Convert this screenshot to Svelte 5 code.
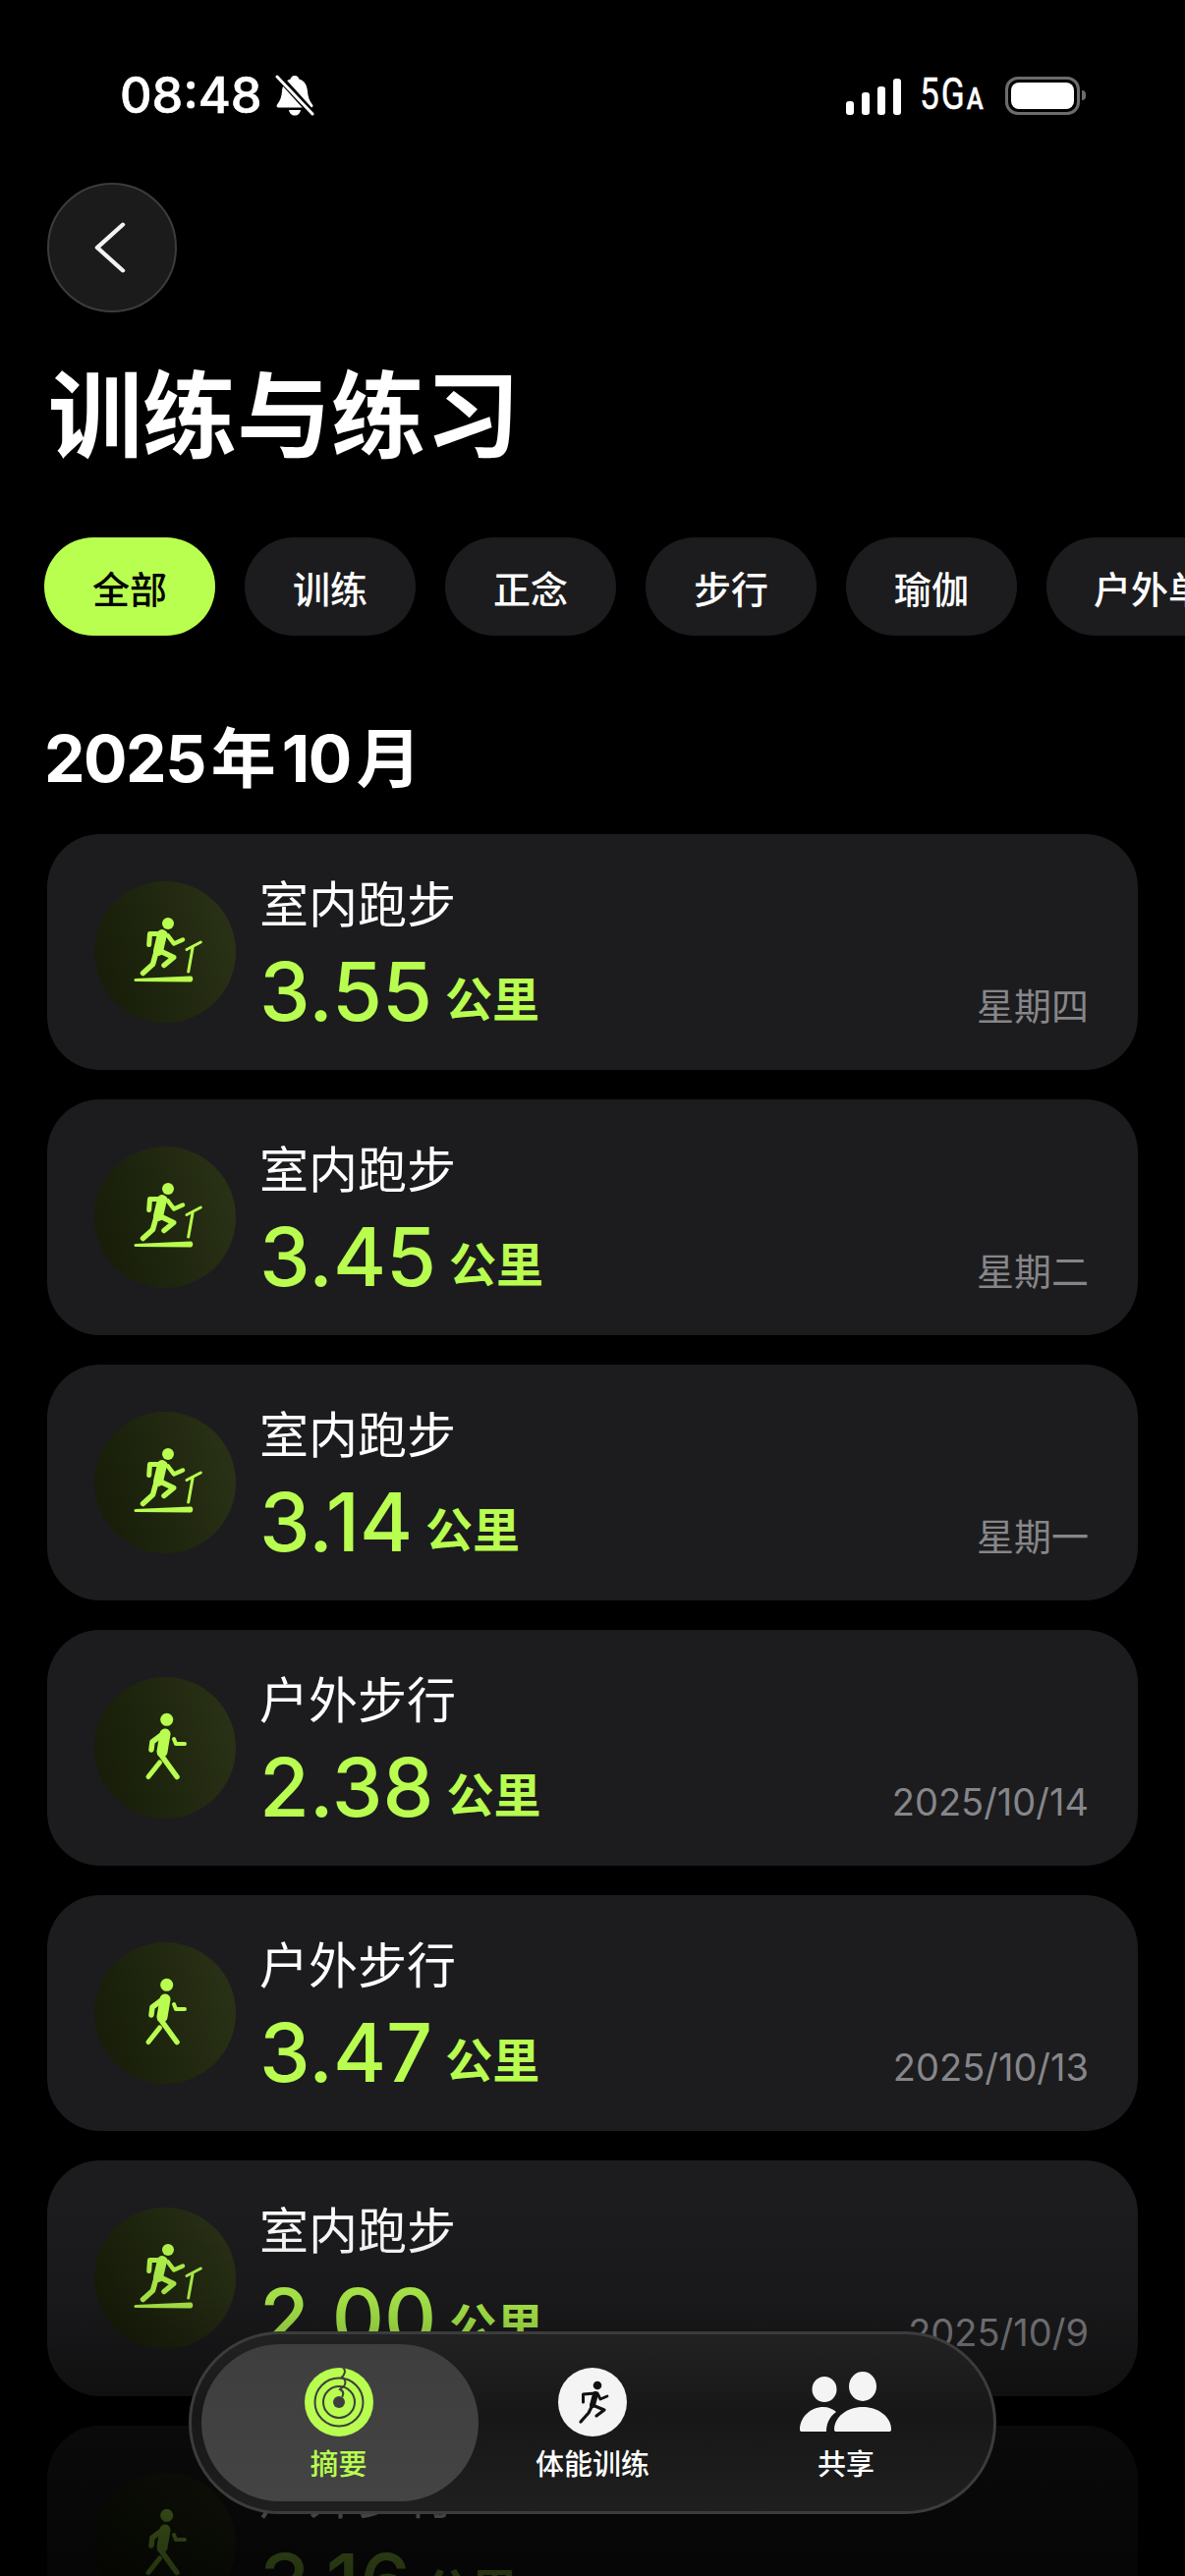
<script>
  const chips = ["全部", "训练", "正念", "步行", "瑜伽", "户外单车"];
  const items = [
    { kind: "run", title: "室内跑步", value: "3.55", date: "星期四" },
    { kind: "run", title: "室内跑步", value: "3.45", date: "星期二" },
    { kind: "run", title: "室内跑步", value: "3.14", date: "星期一" },
    { kind: "walk", title: "户外步行", value: "2.38", date: "2025/10/14" },
    { kind: "walk", title: "户外步行", value: "3.47", date: "2025/10/13" },
    { kind: "run", title: "室内跑步", value: "2.00", date: "2025/10/9" },
    { kind: "walk", title: "户外步行", value: "3.16", date: "2025/10/8" }
  ];
</script>

<div class="page">
  <div class="status">
    <div class="status-left">
      <span class="time">08:48</span>
      <svg class="bell" viewBox="0 0 40 42" width="40" height="42">
        <path d="M20 1c2.500 0 4 1.600 4.400 3.600C30 6.300 32.500 11 33 17c.4 5 1.500 9 5 13.500 1 1.300.3 3-1.500 3H3.500c-1.800 0-2.500-1.700-1.500-3C5.500 26 6.600 22 7 17c.5-6 3-10.700 8.600-12.400C16 2.600 17.500 1 20 1z" fill="#fff"/>
        <path d="M14 36h12c-.5 3.500-3 5.500-6 5.500s-5.500-2-6-5.500z" fill="#fff"/>
        <path d="M2 0 40 42" stroke="#000" stroke-width="7"/>
        <path d="M2 2 38 40" stroke="#fff" stroke-width="3" stroke-linecap="round"/>
      </svg>
    </div>
    <div class="status-right">
      <div class="signal"><i class="b1"></i><i class="b2"></i><i class="b3"></i><i class="b4"></i></div>
      <span class="net">5G<small>A</small></span>
      <div class="battery"><div class="battery-fill"></div></div>
      <div class="nub"></div>
    </div>
  </div>

  <div class="back">
    <svg viewBox="0 0 40 60" width="40" height="60">
      <path d="M35 4 9 30l26 26" fill="none" stroke="#f2f2f2" stroke-width="4.500" stroke-linecap="round" stroke-linejoin="round"/>
    </svg>
  </div>

  <h1>训练与练习</h1>

  <div class="chips">
    {#each chips as chip, i}
      <div class="chip" class:on={i === 0}>{chip}</div>
    {/each}
  </div>

  <h2>2025<span class="cjk">年</span>10<span class="cjk">月</span></h2>

  <div class="list">
    {#each items as item}
      <div class="card">
        <div class="disc">
          <svg viewBox="0 0 144 144" width="144" height="144">
            {#if item.kind === "run"}
              <circle cx="75" cy="43" r="6" fill="#b8fd4f"/>
              <g fill="none" stroke="#b8fd4f" stroke-linecap="round" stroke-linejoin="round">
                <path d="M55.700 64.500 56.500 53.500 72 53.500" stroke-width="5"/>
                <path d="M75 55.500 81 63.500 90 59.500" stroke-width="4.500"/>
                <path d="M69 54 65 71" stroke-width="10"/>
                <path d="M63 72 59.500 84.500 49.500 93.500" stroke-width="5.500"/>
                <path d="M65 70 80.700 77.500 71 85.500" stroke-width="5.500"/>
                <path d="M95.700 92 100 68" stroke-width="3"/>
                <path d="M94 69.500 108.300 62" stroke-width="3"/>
              </g>
              <path d="M42 99 98 96.500c3-.1 3.200 5.800 0 6L42 102c-2 0-2-2.900 0-3z" fill="#b8fd4f"/>
            {:else}
              <circle cx="73.700" cy="43.300" r="6.500" fill="#b8fd4f"/>
              <g fill="none" stroke="#b8fd4f" stroke-linecap="round" stroke-linejoin="round">
                <path d="M71 57 59 66 58 74" stroke-width="5.500"/>
                <path d="M72 58 69 76" stroke-width="11"/>
                <path d="M67 78 84 101.500" stroke-width="5.500"/>
                <path d="M66.500 87 55 101.500" stroke-width="5"/>
                <path d="M81 63 83 68 92 68" stroke-width="4"/>
              </g>
            {/if}
          </svg>
        </div>
        <div class="text">
          <div class="name">{item.title}</div>
          <div class="amount"><span class="num">{item.value}</span><span class="unit">公里</span></div>
        </div>
        <div class="date">{item.date}</div>
      </div>
    {/each}
  </div>

  <div class="fade"></div>

  <nav class="tabs">
    <div class="tab active">
      <svg viewBox="0 0 70 70" width="70" height="70">
        <circle cx="35" cy="35" r="35" fill="#b8fd4f"/>
        <g fill="none" stroke="#3e3e3e" stroke-width="2">
          <circle cx="35" cy="35" r="24.500"/>
          <circle cx="35" cy="35" r="16"/>
          <path d="M39.500 0C42 3 41 7 38 9.500C41 11 42.500 15 40.500 18C39 20 37 21 36 22C39 23.500 40 26 38.500 29" stroke-linecap="round"/>
        </g>
        <circle cx="35" cy="35" r="6" fill="#3e3e3e"/>
      </svg>
      <span class="label lime">摘要</span>
    </div>
    <div class="tab">
      <svg viewBox="0 0 70 70" width="70" height="70">
        <circle cx="35" cy="35" r="35" fill="#f4f4f4"/>
        <circle cx="40" cy="18" r="4.300" fill="#111"/>
        <g fill="none" stroke="#111" stroke-linecap="round" stroke-linejoin="round">
          <path d="M25.500 35 25.500 27 38 26" stroke-width="3"/>
          <path d="M40 26 43 32 50 29" stroke-width="2.800"/>
          <path d="M38 27 35 38" stroke-width="6"/>
          <path d="M35 38 31 46 23 55" stroke-width="3.200"/>
          <path d="M35 38 47 43 39 49" stroke-width="3.200"/>
        </g>
      </svg>
      <span class="label">体能训练</span>
    </div>
    <div class="tab">
      <svg viewBox="0 0 106 70" width="106" height="70">
        <ellipse cx="31" cy="22" rx="12.500" ry="13" fill="#f4f4f4"/>
        <ellipse cx="70" cy="19" rx="14" ry="15" fill="#f4f4f4"/>
        <path d="M41 63C41 50 54 40 70 40S99 50 99 63C99 64.500 98 65 97 65H43C42 65 41 64.500 41 63Z" fill="#f4f4f4"/>
        <path d="M6 63C6 50 17 40 30 40C35 40 40 42 43 45C36 50 33 57 33 65H8C7 65 6 64.500 6 63Z" fill="#f4f4f4"/>
      </svg>
      <span class="label">共享</span>
    </div>
  </nav>
</div>

<style>
  :global(body) {
    background: #000;
  }

  .page {
    position: relative;
    height: 2622px;
    overflow: hidden;
    background: #000;
    color: #fff;
    font-family: Inter, "Noto Sans CJK SC", sans-serif;
  }

  .status {
    height: 186px;
    box-sizing: border-box;
    padding: 76px 101px 0 122px;
    display: flex;
    justify-content: space-between;
    align-items: flex-start;
  }

  .status-left {
    display: flex;
    align-items: center;
    gap: 13px;
    height: 42px;
  }

  .time {
    font-size: 50.500px;
    font-weight: 500;
    line-height: 42px;
    -webkit-text-stroke: 0.6px #fff;
  }

  .status-right {
    display: flex;
    align-items: center;
    height: 42px;
  }

  .signal {
    display: flex;
    align-items: flex-end;
    gap: 7.5px;
    height: 37px;
    margin-top: 3px;
  }

  .signal i {
    display: block;
    width: 8.500px;
    background: #fff;
    border-radius: 3px;
  }

  .b1 { height: 14px; }
  .b2 { height: 23px; }
  .b3 { height: 29px; }
  .b4 { height: 37px; }

  .net {
    width: 66px;
    margin: 2px 21px 0 19px;
    font-family: Roboto, sans-serif;
    font-size: 44px;
    line-height: 42px;
    transform: scaleX(0.8);
    transform-origin: left center;
    white-space: nowrap;
    letter-spacing: 2.500px;
    -webkit-text-stroke: 0.5px #fff;
  }

  .net small {
    font-size: 32px;
    font-weight: 500;
  }

  .battery {
    box-sizing: border-box;
    width: 76px;
    height: 39px;
    padding: 3px;
    border: 3px solid #6c6c6c;
    border-radius: 13px;
  }

  .battery-fill {
    height: 100%;
    background: #fff;
    border-radius: 8px;
  }

  .nub {
    width: 4px;
    height: 10px;
    margin-left: 2px;
    background: #6c6c6c;
    border-radius: 0 4px 4px 0;
  }

  .back {
    box-sizing: border-box;
    width: 132px;
    height: 132px;
    margin-left: 48px;
    display: flex;
    align-items: center;
    justify-content: center;
    background: #1b1b1b;
    border: 2px solid #3c3c3c;
    border-radius: 50%;
  }

  .back svg {
    margin-right: 8px;
    transform: scale(1, 0.9);
  }

  h1 {
    margin: 45px 0 0 49px;
    font-size: 96px;
    line-height: 120px;
    font-weight: 700;
  }

  .chips {
    display: flex;
    gap: 30px;
    margin-top: 64px;
    padding-left: 45px;
  }

  .chip {
    flex: none;
    min-width: 174px;
    height: 100px;
    box-sizing: border-box;
    display: flex;
    align-items: center;
    justify-content: center;
    padding: 0 48px;
    background: #1c1c1e;
    border-radius: 50px;
    font-size: 38px;
    font-weight: 500;
    white-space: nowrap;
  }

  .chip.on {
    background: #b9ff50;
    color: #000;
  }

  h2 {
    margin: 87px 0 0 45px;
    height: 76px;
    font-size: 66px;
    line-height: 76px;
    font-weight: 700;
    letter-spacing: -1.500px;
    white-space: nowrap;
  }

  .cjk {
    margin: 0 6px;
    letter-spacing: 0;
  }

  .list {
    display: flex;
    flex-direction: column;
    gap: 30px;
    margin: 39px 48px 0;
  }

  .card {
    flex: none;
    display: flex;
    align-items: center;
    height: 240px;
    box-sizing: border-box;
    padding: 0 50px 0 48px;
    background: #1c1c1e;
    border-radius: 54px;
  }

  .disc {
    flex: none;
    width: 144px;
    height: 144px;
    border-radius: 50%;
    background: linear-gradient(75deg, #151b07, #2b3317);
  }

  .text {
    margin: 22px 0 0 24px;
  }

  .name {
    font-size: 50px;
    line-height: 64px;
    font-weight: 400;
  }

  .amount {
    display: flex;
    align-items: baseline;
    margin-top: 6px;
    color: #b8fd4f;
    line-height: 100px;
  }

  .num {
    font-size: 82.500px;
    font-weight: 500;
  }

  .unit {
    margin-left: 13px;
    font-size: 48px;
    font-weight: 700;
    transform: translateY(-4px);
  }

  .date {
    margin-left: auto;
    align-self: flex-end;
    margin-bottom: 41px;
    color: #86868a;
    font-size: 38px;
    line-height: 48px;
  }

  .fade {
    position: absolute;
    left: 0;
    right: 0;
    bottom: 0;
    height: 442px;
    background: linear-gradient(to bottom, rgba(0, 0, 0, 0) 14%, rgba(0, 0, 0, 0.12) 36%, rgba(0, 0, 0, 0.4) 57%, rgba(0, 0, 0, 0.64) 66%, rgba(0, 0, 0, 0.8));
    pointer-events: none;
  }

  .tabs {
    position: absolute;
    left: 192px;
    top: 2373px;
    width: 822px;
    height: 186px;
    box-sizing: border-box;
    padding: 10px;
    display: grid;
    grid-template-columns: 282px 232px 284px;
    background: linear-gradient(to bottom, #222 0%, #171717 45%, #1f1f1f 100%);
    border: 3px solid #3c3c3c;
    border-radius: 93px;
  }

  .tab {
    display: flex;
    flex-direction: column;
    align-items: center;
    padding-top: 24px;
    border-radius: 81px;
  }

  .tab.active {
    padding-right: 3px;
    background: linear-gradient(to bottom, #3e3e3e, #444 100%);
  }

  .label {
    margin-top: 8px;
    font-size: 29px;
    line-height: 42px;
    font-weight: 500;
  }

  .lime {
    color: #b8fd4f;
  }
</style>
